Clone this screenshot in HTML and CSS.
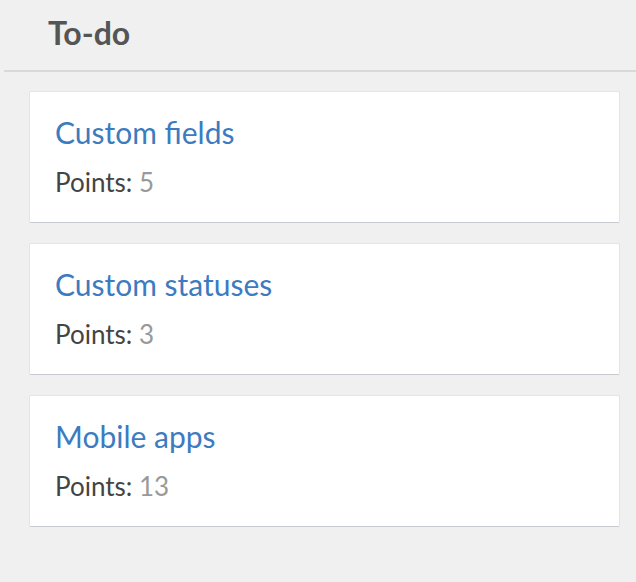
FILE: index.html
```html
<!DOCTYPE html>
<html lang="en">
<head>
<meta charset="UTF-8">
<title>To-do</title>
<link rel="stylesheet" href="styles.css">
</head>
<body>
    <div class="column">
        <div class="column-header">
            <h2>To-do</h2>
        </div>
        <div class="card-list">
            <div class="card">
                <a class="card-title" href="#">Custom fields</a>
                <div class="card-points">Points: <span class="points-value">5</span></div>
            </div>
            <div class="card">
                <a class="card-title" href="#">Custom statuses</a>
                <div class="card-points">Points: <span class="points-value">3</span></div>
            </div>
            <div class="card">
                <a class="card-title" href="#">Mobile apps</a>
                <div class="card-points">Points: <span class="points-value">13</span></div>
            </div>
        </div>
    </div>
</body>
</html>
```

FILE: styles.css
```css
body {
    font-family: Lato, "Open Sans", sans-serif;
    background-color: #f0f0f0;
    margin: 0;
    padding: 0;
    color: #444;
}
.column {
    padding-left: 4px;
}
.column-header {
    height: 72px;
    border-bottom: 2px solid #d9d9d9;
    box-sizing: border-box;
    padding: 13px 0 0 44px;
}
.column-header h2 {
    margin: 0;
    font-size: 32px;
    line-height: 40px;
    font-weight: bold;
    color: #555;
}
.card-list {
    display: flex;
    flex-direction: column;
    gap: 20px;
    padding: 19px 16px 0 25px;
}
.card {
    background: white;
    border: 1px solid #e4e4e6;
    border-bottom-color: #c6c9ce;
    border-radius: 2px;
    height: 132px;
    box-sizing: border-box;
    padding: 22px 25px;
}
.card-title {
    display: block;
    color: #3d7bc0;
    text-decoration: none;
    font-size: 30px;
    line-height: 36px;
}
.card-points {
    margin-top: 17px;
    font-size: 26px;
    line-height: 30px;
}
.points-value {
    color: #999;
}
```
